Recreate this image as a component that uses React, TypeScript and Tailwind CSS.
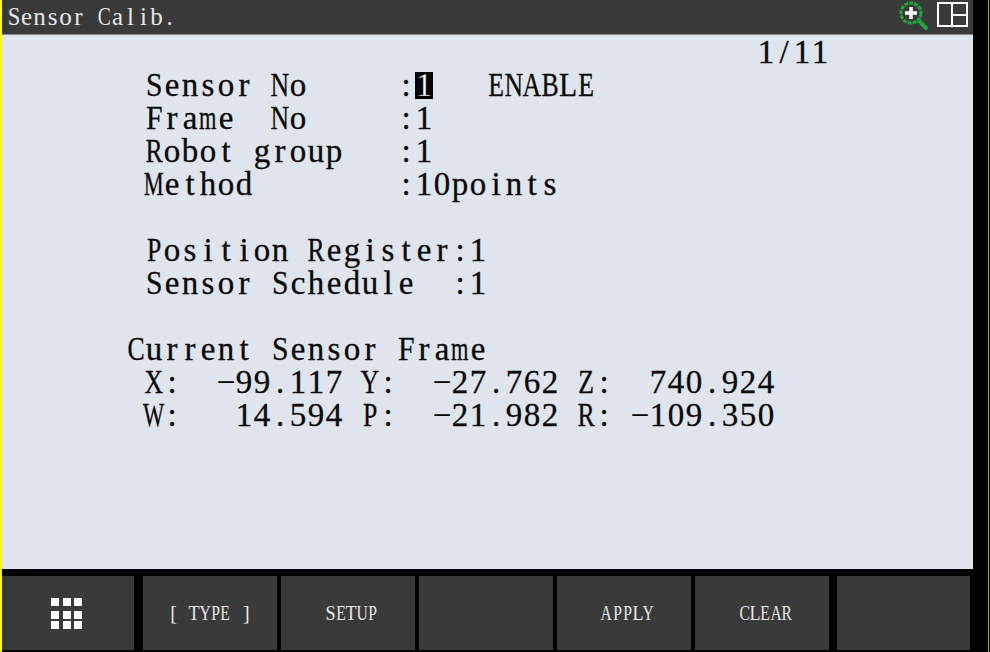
import React from "react";

const lines = [
  "                                          1/11",
  "        Sensor No     :1   ENABLE",
  "        Frame  No     :1",
  "        Robot group   :1",
  "        Method        :10points",
  "",
  "        Position Register:1",
  "        Sensor Schedule  :1",
  "",
  "       Current Sensor Frame",
  "        X:  -99.117 Y:  -27.762 Z:  740.924",
  "        W:   14.594 P:  -21.982 R: -109.350",
];

const softkeys = ["", "[ TYPE ]", "SETUP", "", "APPLY", "CLEAR", ""];

// squeeze the proportional serif into a fixed pitch look, wide letters need more
function squeeze(ch: string) {
  if ("MWmw".includes(ch)) return "scale-x-[0.68]";
  if ("ABCDEGHKNOPQRUVXYZ".includes(ch)) return "scale-x-[0.78]";
  if ("FLST".includes(ch)) return "scale-x-[0.9]";
  return "";
}

// the pendant font is fixed pitch, so each char gets its own cell
function Cells({ text, cell, invertAt }: { text: string; cell: string; invertAt?: number }) {
  return (
    <>
      {text.split("").map((ch, i) => (
        <span
          key={i}
          className={
            "inline-flex shrink-0 items-center justify-center " +
            cell +
            (i === invertAt ? " bg-black text-white" : "")
          }
        >
          <span className={"inline-block " + squeeze(ch)}>
            {ch === " " ? "\u00a0" : ch === "-" ? "\u2212" : ch}
          </span>
        </span>
      ))}
    </>
  );
}

function GridIcon() {
  return (
    <svg className="-ml-[3px] mt-[2px]" width="32" height="32" viewBox="0 0 32 32" fill="#fff">
      {[0, 13, 23].map((y) =>
        [0, 12, 23].map((x) => <rect key={x + "-" + y} x={x} y={y} width="8" height="8" />)
      )}
    </svg>
  );
}

export default function App() {
  return (
    <div className="flex h-[652px] w-[990px] overflow-hidden bg-black font-['Liberation_Serif',serif]">
      <div className="w-[2px] shrink-0 bg-[#ffff00]" />
      <div className="flex w-[971px] shrink-0 flex-col">
        <div className="flex h-[35px] shrink-0 justify-between border-b border-[#8a8a8a] bg-[#3a3a3a] pl-[5px] pr-[4px]">
          <div className="flex items-center pb-[2px] text-[25px] leading-none text-[#e8e8e8]">
            <Cells text="Sensor Calib." cell="w-[13px]" />
          </div>
          <div className="flex items-start gap-[8px] pt-[1px]">
            <svg width="30" height="30" viewBox="0 0 30 30">
              <line x1="19" y1="19" x2="27" y2="27" stroke="#1fa53a" strokeWidth="4" strokeLinecap="round" />
              <circle cx="12" cy="12" r="10" fill="#3a3a3a" stroke="#1fa53a" strokeWidth="3" strokeDasharray="4 1" />
              <path d="M6 12h12M12 6v12" stroke="#fff" strokeWidth="3.5" />
            </svg>
            <svg className="mt-[1px]" width="32" height="26" viewBox="0 0 32 26" fill="none" stroke="#fff" strokeWidth="2">
              <rect x="1" y="1" width="29" height="23" />
              <path d="M15 1v23M15 13h15" />
            </svg>
          </div>
        </div>
        <div className="h-[534px] shrink-0 bg-[#e0e5ed] pt-[1px] text-[33px] leading-none text-[#0a0a0a] [-webkit-text-stroke:0.3px_#0a0a0a]">
          {lines.map((text, i) => (
            <div key={i} className="-ml-[1px] flex h-[33px] items-center">
              <Cells text={text} cell="h-[27px] w-[18px]" invertAt={i === 1 ? 23 : undefined} />
            </div>
          ))}
        </div>
        <div className="mt-[7px] flex h-[74px] shrink-0 gap-[4px] text-[20px] leading-none text-[#e8e8e8]">
          {softkeys.map((label, i) => (
            <div
              key={i}
              className={
                "flex h-full items-center justify-center bg-[#3a3a3a] " +
                (i === 0 ? "mr-[5px] w-[132px]" : i === 6 ? "ml-[4px] w-[133px]" : "w-[134px]") +
                (i > 1 && label ? " pl-[7px]" : "")
              }
            >
              {i === 0 ? <GridIcon /> : <Cells text={label} cell="w-[10.4px]" />}
            </div>
          ))}
        </div>
      </div>
      <div className="ml-auto flex w-[17px] shrink-0 justify-end">
        <div className="mr-[1px] w-[1px] bg-[#a8a800]" />
      </div>
    </div>
  );
}
